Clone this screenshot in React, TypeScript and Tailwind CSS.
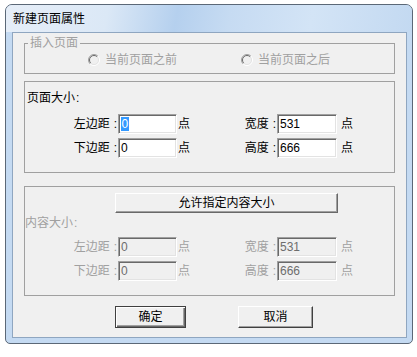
import React from 'react';

const FONT = "font-['Liberation_Sans','Noto_Sans_CJK_SC',sans-serif]";

const Radio = () => (
  <svg width="12" height="12" viewBox="0 0 12 12" className="shrink-0">
    <circle cx="6" cy="6" r="4" fill="#f0f0f0" />
    <path d="M2.1 9.9 A5.5 5.5 0 0 1 9.9 2.1" fill="none" stroke="#a0a0a0" strokeWidth="1" />
    <path d="M2.8 9.2 A4.5 4.5 0 0 1 9.2 2.8" fill="none" stroke="#696969" strokeWidth="1" />
    <path d="M9.9 2.1 A5.5 5.5 0 0 1 2.1 9.9" fill="none" stroke="#ffffff" strokeWidth="1" />
    <path d="M9.2 2.8 A4.5 4.5 0 0 1 2.8 9.2" fill="none" stroke="#e3e3e3" strokeWidth="1" />
  </svg>
);

const Field = ({ value, width, disabled, selected }: { value: string; width: string; disabled?: boolean; selected?: boolean }) => (
  <div
    className={`${width} h-[20px] border border-t-[#a0a0a0] border-l-[#a0a0a0] border-r-white border-b-white shadow-[inset_1px_1px_0_#696969,inset_-1px_-1px_0_#e3e3e3] flex items-center pl-[2px] leading-[14px] ${
      disabled ? 'bg-[#f0f0f0] text-[#6d6d6d]' : 'bg-white text-black'
    }`}
  >
    {selected ? <span className="bg-[#3399ff] text-white h-[14px] px-[0.5px]">{value}</span> : value}
  </div>
);

// label with the small gap before the colon, right-aligned against the field
const Label = ({ text, width, cls }: { text: string; width: string; cls: string }) => (
  <span className={`${width} text-right pr-[1px] ${cls}`}>
    {text}
    <span className="ml-[4px]">:</span>
  </span>
);

const Row = ({ l1, v1, l2, v2, disabled, selected }: { l1: string; v1: string; l2: string; v2: string; disabled?: boolean; selected?: boolean }) => {
  const t = disabled ? 'text-[#a0a0a0]' : 'text-black';
  return (
    <div className="flex items-center h-[20px] leading-[14px]">
      <Label text={l1} width="w-[93px]" cls={t} />
      <Field value={v1} width="w-[59px]" disabled={disabled} selected={selected} />
      <span className={`ml-[1px] ${t}`}>点</span>
      <Label text={l2} width="w-[87px]" cls={t} />
      <Field value={v2} width="w-[60px]" disabled={disabled} />
      <span className={`ml-[4px] ${t}`}>点</span>
    </div>
  );
};

export default function App() {
  return (
    <div className={`w-[417px] h-[357px] bg-white pt-[4px] pl-[5px] text-[12px] ${FONT}`}>
      <div className="w-[408px] h-[340px] border border-[#5b6877] rounded-t-[7px] rounded-b-[5px] bg-[#c4daf2] overflow-hidden">
        {/* title bar */}
        <div className="h-[27px] flex items-center pl-[7px] pt-[1px] text-black leading-[14px] bg-[linear-gradient(100deg,#e6eef8_0%,#dbe8f6_25%,#b5d0ee_42%,#c6dbf2_55%,#d3e4f6_75%,#c3d9f1_100%)]">
          新建页面属性
        </div>

        <div className="pl-[6px]">
          <div className="w-[395px] h-[306px] border border-[#8fa6c0] bg-[#f0f0f0] pl-[11px]">
            {/* 插入页面 */}
            <fieldset className="mt-[3px] w-[371px] border border-[#a0a0a0] pb-[6px]">
              <legend className="ml-[3px] px-[2px] leading-[14px] text-[#a0a0a0]">插入页面</legend>
              <div className="mt-[3px] flex items-center h-[14px] leading-[14px] text-[#a0a0a0]">
                <span className="ml-[63px]" />
                <Radio />
                <span className="ml-[5px]">当前页面之前</span>
                <span className="ml-[64px]" />
                <Radio />
                <span className="ml-[5px]">当前页面之后</span>
              </div>
            </fieldset>

            {/* 页面大小 */}
            <div className="mt-[7px] w-[371px] border border-[#a0a0a0] pt-[9px] pb-[14px]">
              <div className="pl-[2px] leading-[14px]">
                页面大小<span className="ml-[1px]">:</span>
              </div>
              <div className="mt-[9px]">
                <Row l1="左边距" v1="0" l2="宽度" v2="531" selected />
              </div>
              <div className="mt-[4px]">
                <Row l1="下边距" v1="0" l2="高度" v2="666" />
              </div>
            </div>

            {/* 内容大小 */}
            <div className="mt-[13px] w-[371px] border border-[#a0a0a0] pt-[6px] pb-[14px]">
              <div className="ml-[90px] w-[223px] h-[20px] flex items-center justify-center border border-t-white border-l-white border-r-[#696969] border-b-[#696969] shadow-[inset_-1px_-1px_0_#a0a0a0] text-black leading-[14px]">
                允许指定内容大小
              </div>
              <div className="mt-[3px] leading-[14px] text-[#a0a0a0]">
                内容大小<span className="ml-[1px]">:</span>
              </div>
              <div className="mt-[7px]">
                <Row l1="左边距" v1="0" l2="宽度" v2="531" disabled />
              </div>
              <div className="mt-[4px]">
                <Row l1="下边距" v1="0" l2="高度" v2="666" disabled />
              </div>
            </div>

            {/* buttons */}
            <div className="mt-[10px] flex pl-[91px]">
              <div className="w-[71px] h-[22px] flex items-center justify-center border border-[#404040] shadow-[inset_1px_1px_0_#fff,inset_-1px_-1px_0_#696969,inset_-2px_-2px_0_#a0a0a0] text-black leading-[14px]">
                确定
              </div>
              <div className="ml-[52px] w-[75px] h-[22px] flex items-center justify-center border border-t-white border-l-white border-r-[#404040] border-b-[#404040] shadow-[inset_-1px_-1px_0_#a0a0a0] text-black leading-[14px]">
                取消
              </div>
            </div>
          </div>
        </div>
      </div>
    </div>
  );
}
